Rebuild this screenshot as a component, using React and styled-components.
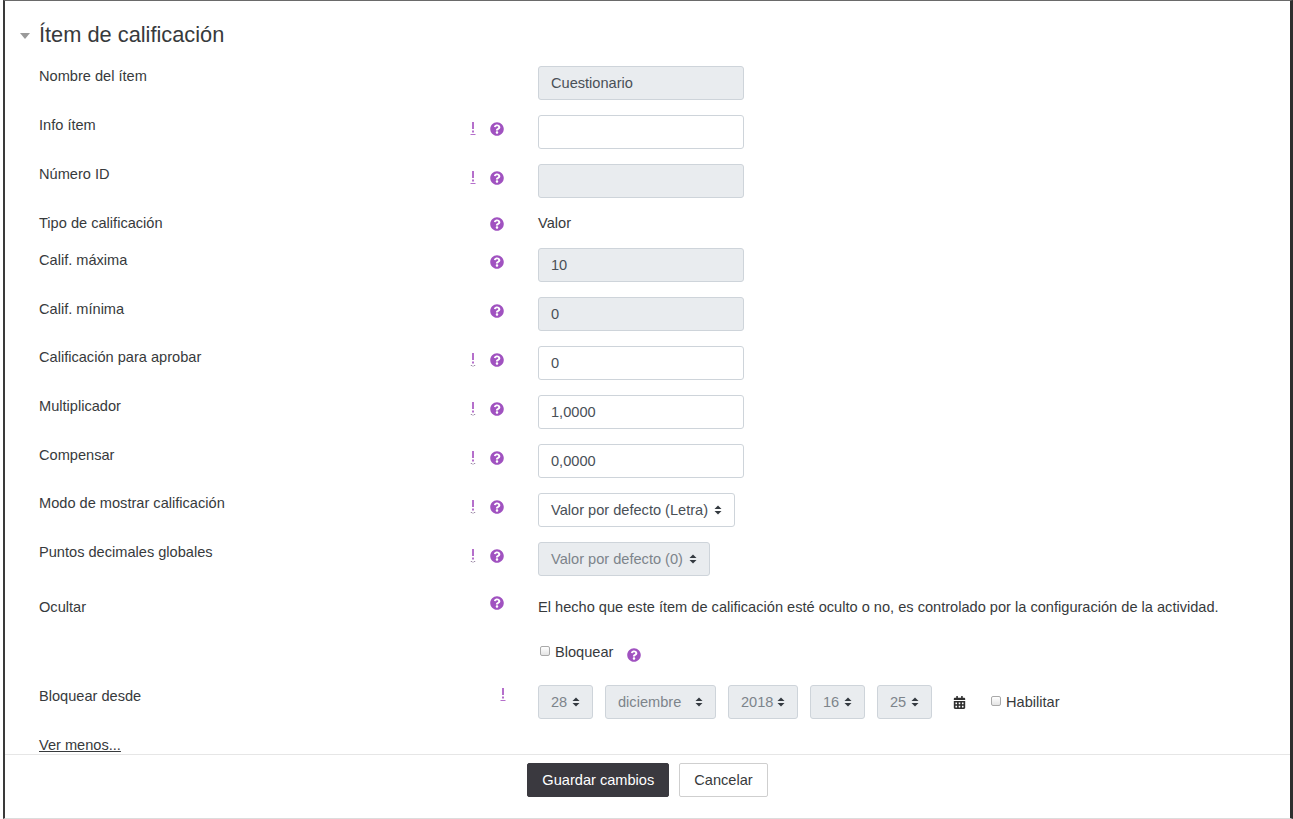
import React from 'react';
import styled, { createGlobalStyle } from 'styled-components';
import { FaQuestionCircle, FaCalendarAlt } from 'react-icons/fa';

const GlobalStyle = createGlobalStyle`
  html, body {
    margin: 0;
    padding: 0;
    background: #ffffff;
  }
  body {
    font-family: "Liberation Sans", Arial, sans-serif;
    color: #373a3c;
  }
`;

const Frame = styled.div`
  box-sizing: border-box;
  width: 1290px;
  height: 819px;
  margin-left: 3px;
  border-left: 2px solid #3a3a3a;
  border-top: 1px solid #6a6a6a;
  border-right: 3px solid #2e2e2e;
  border-bottom: 1px solid #dcdcdc;
  display: flex;
  flex-direction: column;
  overflow: hidden;
`;

const Section = styled.div`
  padding-top: 21px;
  flex: 1;
`;

const Legend = styled.div`
  display: flex;
  align-items: center;
  gap: 9px;
  padding-left: 15px;
  margin-bottom: 18px;
  font-size: 21.8px;
  line-height: 26px;
  color: #373a3c;
`;

const Caret = styled.span`
  width: 0;
  height: 0;
  border-left: 5px solid transparent;
  border-right: 5px solid transparent;
  border-top: 6px solid #9a9a9a;
  margin-top: 1px;
`;

const Row = styled.div`
  display: flex;
  align-items: flex-start;
  padding-left: 34px;
  margin-top: ${({ $top }) => $top || 0}px;
  margin-bottom: ${({ $gap }) => ($gap === undefined ? 15 : $gap)}px;
  font-size: 14.6px;
`;

const Label = styled.div`
  width: 425px;
  line-height: 20px;
  padding-top: ${({ $pad }) => $pad || 0}px;
  color: #373a3c;
`;

const Icons = styled.div`
  width: ${({ $w }) => $w || 40}px;
  height: 14px;
  margin-top: ${({ $top }) => $top}px;
  margin-right: ${({ $w }) => 42 - ($w || 40)}px;
  display: flex;
  align-items: center;
  justify-content: flex-end;
  gap: 14px;
`;

const Field = styled.div`
  margin-left: 32px;
  display: flex;
  align-items: center;
  min-height: 20px;
`;

const TextInput = styled.div`
  box-sizing: border-box;
  width: 206px;
  height: 34px;
  padding: 0 12px;
  display: flex;
  align-items: center;
  border: 1px solid #ced4da;
  border-radius: 3px;
  background: ${({ $disabled }) => ($disabled ? '#e9ecef' : '#ffffff')};
  color: #495057;
  line-height: 20px;
`;

const SelectBox = styled.div`
  position: relative;
  box-sizing: border-box;
  height: 34px;
  width: ${({ $w }) => ($w ? `${$w}px` : 'auto')};
  padding: 0 26px 0 12px;
  display: flex;
  align-items: center;
  border: 1px solid #ced4da;
  border-radius: 3px;
  background: ${({ $disabled }) => ($disabled ? '#e9ecef' : '#ffffff')};
  color: ${({ $disabled }) => ($disabled ? '#7d848b' : '#495057')};
  white-space: nowrap;
`;

const Arrow = styled.svg`
  position: absolute;
  right: 12px;
  top: 50%;
  margin-top: -5px;
`;

const StaticText = styled.div`
  line-height: 20px;
  color: #373a3c;
  white-space: nowrap;
`;

const CheckLabel = styled.label`
  display: flex;
  align-items: center;
  gap: 5px;
  line-height: 20px;
  color: #373a3c;
  margin-left: ${({ $left }) => $left || 0}px;
`;

const Check = styled.span`
  box-sizing: border-box;
  display: inline-block;
  width: 10px;
  height: 10px;
  margin-left: 2px;
  margin-top: -3px;
  border: 1px solid #a9a9a9;
  border-radius: 2px;
  background: linear-gradient(#ffffff, #e4e4e4);
`;

const DateRow = styled.div`
  display: flex;
  align-items: center;
  gap: 12px;
`;

const CalendarIcon = styled.span`
  display: flex;
  margin-left: 9px;
  color: #2f2f2f;
`;

const HelpWrap = styled.span`
  display: inline-flex;
  margin-left: ${({ $left }) => $left || 0}px;
  margin-top: ${({ $down }) => $down || 0}px;
  color: #a052c0;
`;

const MoreLink = styled.a`
  display: block;
  margin: 17px 0 0 34px;
  width: max-content;
  font-size: 14.6px;
  line-height: 18px;
  color: #373a3c;
  text-decoration: underline;
`;

const Footer = styled.div`
  border-top: 1px solid #e6e6e6;
  padding: 8px 0 21px;
  display: flex;
  justify-content: center;
  gap: 10px;
`;

const Button = styled.button`
  box-sizing: border-box;
  height: 34px;
  padding: 0 14px;
  font-family: "Liberation Sans", Arial, sans-serif;
  font-size: 14.6px;
  border-radius: 2px;
  border: 1px solid ${({ $primary }) => ($primary ? '#3a393f' : '#cfcfcf')};
  background: ${({ $primary }) => ($primary ? '#3a393f' : '#ffffff')};
  color: ${({ $primary }) => ($primary ? '#ffffff' : '#373a3c')};
`;

const Help = ({ left, down }) => (
  <HelpWrap $left={left} $down={down}>
    <FaQuestionCircle size={14} />
  </HelpWrap>
);

const Advanced = ({ kind }) => (
  <svg width="6" height="16" viewBox="0 0 6 16">
    <rect x="2" y="1" width="2" height="7" fill="#b56fcb" />
    <rect x="2" y="9.5" width="2" height="2" fill="#b56fcb" />
    {kind === 'line' ? (
      <rect x="0.5" y="13" width="5" height="1" fill="#b56fcb" />
    ) : (
      <g fill="#9c8aa6">
        <rect x="0.8" y="13" width="1.2" height="1" />
        <rect x="2.4" y="13.6" width="1.2" height="1" />
        <rect x="4" y="13" width="1.2" height="1" />
      </g>
    )}
  </svg>
);

const SelectArrow = () => (
  <Arrow width="8" height="10" viewBox="0 0 8 10">
    <path d="M0.5 4 L4 0.5 L7.5 4 Z" fill="#343a40" />
    <path d="M0.5 6 L4 9.5 L7.5 6 Z" fill="#343a40" />
  </Arrow>
);

const Select = ({ value, disabled, w }) => (
  <SelectBox $disabled={disabled} $w={w}>
    {value}
    <SelectArrow />
  </SelectBox>
);

const fields = [
  { label: 'Nombre del ítem', input: 'Cuestionario', disabled: true },
  { label: 'Info ítem', adv: 'line', help: true, input: '' },
  { label: 'Número ID', adv: 'line', help: true, input: '', disabled: true },
  { label: 'Tipo de calificación', help: true, text: 'Valor' },
  { label: 'Calif. máxima', help: true, input: '10', disabled: true, pad: 2 },
  { label: 'Calif. mínima', help: true, input: '0', disabled: true, pad: 2 },
  { label: 'Calificación para aprobar', adv: 'dots', help: true, input: '0', pad: 1 },
  { label: 'Multiplicador', adv: 'dots', help: true, input: '1,0000', pad: 1 },
  { label: 'Compensar', adv: 'dots', help: true, input: '0,0000', pad: 1 },
  { label: 'Modo de mostrar calificación', adv: 'dots', help: true, select: 'Valor por defecto (Letra)' },
  { label: 'Puntos decimales globales', adv: 'dots', help: true, select: 'Valor por defecto (0)', disabled: true, gap: 21 },
];

const dateParts = [
  { value: '28', w: 55 },
  { value: 'diciembre', w: 111 },
  { value: '2018', w: 70 },
  { value: '16', w: 55 },
  { value: '25', w: 55 },
];

function FieldControl({ f }) {
  if (f.text) return <StaticText>{f.text}</StaticText>;
  if (f.select) return <Select value={f.select} disabled={f.disabled} />;
  return <TextInput $disabled={f.disabled}>{f.input}</TextInput>;
}

export default function App() {
  return (
    <>
      <GlobalStyle />
      <Frame>
        <Section>
          <Legend>
            <Caret />
            Ítem de calificación
          </Legend>

          {fields.map((f) => (
            <Row key={f.label} $gap={f.gap}>
              <Label $pad={f.pad}>{f.label}</Label>
              <Icons $top={f.text ? 4 : 7}>
                {f.adv && <Advanced kind={f.adv} />}
                {f.help && <Help />}
              </Icons>
              <Field>
                <FieldControl f={f} />
              </Field>
            </Row>
          ))}

          <Row $gap={25}>
            <Label>Ocultar</Label>
            <Icons $top={-1}>
              <Help />
            </Icons>
            <Field>
              <StaticText>
                El hecho que este ítem de calificación esté oculto o no, es controlado por la configuración de la actividad.
              </StaticText>
            </Field>
          </Row>

          <Row $gap={23}>
            <Label />
            <Icons $top={3} />
            <Field>
              <CheckLabel>
                <Check />
                Bloquear
              </CheckLabel>
              <Help left={14} down={5} />
            </Field>
          </Row>

          <Row $gap={0}>
            <Label $pad={1}>Bloquear desde</Label>
            <Icons $top={3} $w={42}>
              <Advanced kind="line" />
            </Icons>
            <Field>
              <DateRow>
                {dateParts.map((p) => (
                  <Select key={p.value} value={p.value} w={p.w} disabled />
                ))}
                <CalendarIcon>
                  <FaCalendarAlt size={13} />
                </CalendarIcon>
                <CheckLabel $left={11}>
                  <Check />
                  Habilitar
                </CheckLabel>
              </DateRow>
            </Field>
          </Row>

          <MoreLink href="#">Ver menos...</MoreLink>
        </Section>

        <Footer>
          <Button $primary>Guardar cambios</Button>
          <Button>Cancelar</Button>
        </Footer>
      </Frame>
    </>
  );
}
